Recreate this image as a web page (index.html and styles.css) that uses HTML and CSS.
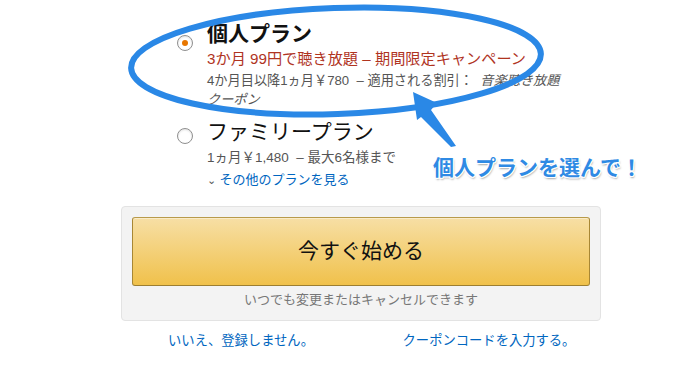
FILE: index.html
```html
<!DOCTYPE html>
<html lang="ja">
<head>
<meta charset="utf-8">
<title>プラン選択</title>
<link rel="stylesheet" href="styles.css">
</head>
<body>
<div class="page">
  <div class="plans">
    <div class="plan plan-first">
      <span class="radio radio-on"><span class="dot"></span></span>
      <div class="plan-body">
        <div class="plan-title bold">個人プラン</div>
        <div class="promo">3か月 99円で聴き放題 – 期間限定キャンペーン</div>
        <div class="note">4か月目以降1ヵ月￥780 &nbsp;– 適用される割引： &nbsp;<i>音楽聴き放題<br>クーポン</i></div>
      </div>
    </div>
    <div class="plan plan-second">
      <span class="radio"></span>
      <div class="plan-body">
        <div class="plan-title">ファミリープラン</div>
        <div class="note note-family">1ヵ月￥1,480 &nbsp;– 最大6名様まで</div>
        <div class="more"><span class="chev">⌄</span> その他のプランを見る</div>
      </div>
    </div>
  </div>

  <div class="cta-box">
    <div class="cta-button"><span class="cta-label">今すぐ始める</span></div>
    <div class="cta-sub">いつでも変更またはキャンセルできます</div>
  </div>

  <div class="links">
    <span class="link">いいえ、登録しません。</span>
    <span class="link link-right">クーポンコードを入力する。</span>
  </div>
</div>

<svg class="overlay" width="700" height="369" viewBox="0 0 700 369" xmlns="http://www.w3.org/2000/svg">
  <ellipse cx="336" cy="61" rx="205" ry="53" fill="none" stroke="#2a88e6" stroke-width="6" transform="rotate(-2 336 61)"/>
  <polygon points="413,92 437,103 431,110 456,146 451,147 421,117 417,120" fill="#2a88e6"/>
</svg>
<div class="callout">個人プランを選んで！</div>
</body>
</html>
```

FILE: styles.css
```css
html, body {
  margin: 0;
  padding: 0;
  background: #ffffff;
}

body {
  width: 700px;
  height: 369px;
  overflow: hidden;
  position: relative;
  font-family: "Liberation Sans", "Noto Sans CJK JP", sans-serif;
  color: #111;
}

.page {
  width: 480px;
  margin-left: 121px;
  display: flex;
  flex-direction: column;
}

.plans {
  padding-left: 56px;
  display: flex;
  flex-direction: column;
}

.plan {
  display: flex;
  gap: 14px;
  align-items: flex-start;
}

.plan-first {
  margin-top: 21px;
}

.plan-second {
  margin-top: 10px;
}

.radio {
  width: 14px;
  height: 14px;
  flex: none;
  border: 1px solid #8f8f8f;
  border-radius: 50%;
  background: #fff;
  box-shadow: inset 0 1px 2px rgba(0,0,0,0.12);
  display: flex;
  align-items: center;
  justify-content: center;
  margin-top: 9px;
}

.radio-on {
  margin-top: 14px;
}

.dot {
  width: 6px;
  height: 6px;
  border-radius: 50%;
  background: #e77600;
}

.plan-body {
  display: flex;
  flex-direction: column;
}

.plan-title {
  font-size: 21px;
  line-height: 26px;
  color: #111;
}

.bold {
  font-weight: bold;
}

.promo {
  font-size: 15.2px;
  line-height: 24px;
  color: #b0341f;
}

.note {
  font-size: 13.2px;
  line-height: 19px;
  color: #555;
}

.note i {
  font-style: italic;
}

.note-family {
  margin-top: 2px;
  line-height: 22px;
  font-size: 13.5px;
}

.more {
  font-size: 13px;
  line-height: 22px;
  color: #0066c0;
}

.chev {
  font-size: 11px;
  color: #555;
}

.cta-box {
  margin-top: 15px;
  background: #f3f3f3;
  border: 1px solid #e3e3e3;
  border-radius: 4px;
  padding: 10px 10px 10px;
  display: flex;
  flex-direction: column;
  align-items: stretch;
}

.cta-button {
  height: 67px;
  border: 1px solid;
  border-color: #b89a4a #a88734 #9c7e31;
  border-radius: 3px;
  background: linear-gradient(to bottom, #f7dfa5, #f0c14b);
  box-shadow: inset 0 1px 0 rgba(255,255,255,0.4);
  display: flex;
  align-items: center;
  justify-content: center;
  font-size: 21px;
  color: #111;
}

.cta-label {
  padding-bottom: 5px;
}

.cta-sub {
  margin-top: 4px;
  text-align: center;
  font-size: 13px;
  line-height: 20px;
  color: #777;
}

.links {
  margin-top: 10px;
  display: grid;
  grid-template-columns: 1fr 1fr;
}

.link {
  text-align: center;
  font-size: 13.3px;
  line-height: 20px;
  color: #0066c0;
}

.link-right {
  padding-left: 16px;
}

.overlay {
  position: absolute;
  left: 0;
  top: 0;
  pointer-events: none;
}

.callout {
  position: absolute;
  left: 433px;
  top: 152px;
  font-size: 21px;
  line-height: 28px;
  font-weight: bold;
  color: #2f8ae4;
  font-family: "Noto Sans CJK JP", sans-serif;
  text-shadow:
    1px 0 0 #fff, -1px 0 0 #fff, 0 1px 0 #fff, 0 -1px 0 #fff,
    1px 1px 0 #fff, -1px -1px 0 #fff, 1px -1px 0 #fff, -1px 1px 0 #fff,
    1px 2px 2px rgba(0,0,0,0.35);
}
```
